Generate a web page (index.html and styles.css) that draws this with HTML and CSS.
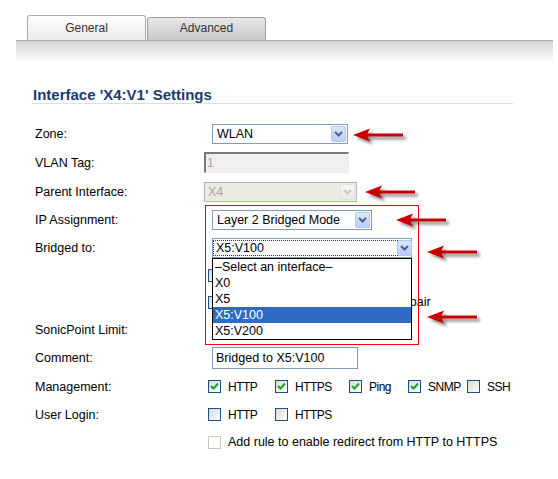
FILE: index.html
```html
<!DOCTYPE html>
<html>
<head>
<meta charset="utf-8">
<link rel="stylesheet" href="styles.css">
</head>
<body>
<div class="tabs">
  <div class="tab active">General</div>
  <div class="tab">Advanced</div>
</div>
<div class="tabbar"></div>
<h2 class="title">Interface 'X4:V1' Settings</h2>

<div class="form">
  <div class="row r28">
    <label>Zone:</label>
    <div class="select w136"><span class="val">WLAN</span><span class="btn"><svg width="9" height="6" viewBox="0 0 9 6"><path d="M1 1 L4.5 4.5 L8 1" /></svg></span></div>
  </div>
  <div class="row r29">
    <label>VLAN Tag:</label>
    <div class="input-dis">1</div>
  </div>
  <div class="row r29">
    <label>Parent Interface:</label>
    <div class="select dis w153"><span class="val">X4</span><span class="btn"><svg width="9" height="6" viewBox="0 0 9 6"><path d="M1 1 L4.5 4.5 L8 1" /></svg></span></div>
  </div>
  <div class="row r28">
    <label>IP Assignment:</label>
    <div class="select w160"><span class="val">Layer 2 Bridged Mode</span><span class="btn"><svg width="9" height="6" viewBox="0 0 9 6"><path d="M1 1 L4.5 4.5 L8 1" /></svg></span></div>
  </div>
  <div class="row r28">
    <label>Bridged to:</label>
    <div class="select w200 focus"><span class="val"><span class="dotted">X5:V100</span></span><span class="btn"><svg width="9" height="6" viewBox="0 0 9 6"><path d="M1 1 L4.5 4.5 L8 1" /></svg></span></div>
  </div>
  <div class="row r26">
    <label></label>
    <div class="opts"><div class="opt"><span class="cb"></span><span class="covered">Block all non-IPv4 traffic</span></div></div>
  </div>
  <div class="row r28">
    <label></label>
    <div class="opts"><div class="opt"><span class="cb"></span><span><span class="covered">Never route traffic on this bridge-</span>pair</span></div></div>
  </div>
  <div class="row r28">
    <label>SonicPoint Limit:</label>
  </div>
  <div class="row r28">
    <label>Comment:</label>
    <div class="input">Bridged to X5:V100</div>
  </div>
  <div class="row r29">
    <label>Management:</label>
    <div class="opts caps">
      <div class="opt w67"><span class="cb on"><svg width="11" height="11" viewBox="0 0 11 11"><path d="M2 5 L4.5 7.5 L9 2.5" /></svg></span><span>HTTP</span></div>
      <div class="opt w74"><span class="cb on"><svg width="11" height="11" viewBox="0 0 11 11"><path d="M2 5 L4.5 7.5 L9 2.5" /></svg></span><span>HTTPS</span></div>
      <div class="opt w59"><span class="cb on"><svg width="11" height="11" viewBox="0 0 11 11"><path d="M2 5 L4.5 7.5 L9 2.5" /></svg></span><span>Ping</span></div>
      <div class="opt w59"><span class="cb on"><svg width="11" height="11" viewBox="0 0 11 11"><path d="M2 5 L4.5 7.5 L9 2.5" /></svg></span><span>SNMP</span></div>
      <div class="opt"><span class="cb"></span><span>SSH</span></div>
    </div>
  </div>
  <div class="row r27">
    <label>User Login:</label>
    <div class="opts caps">
      <div class="opt w67"><span class="cb"></span><span>HTTP</span></div>
      <div class="opt"><span class="cb"></span><span>HTTPS</span></div>
    </div>
  </div>
  <div class="row r28">
    <label></label>
    <div class="opts">
      <div class="opt"><span class="cb disabled"></span><span>Add rule to enable redirect from HTTP to HTTPS</span></div>
    </div>
  </div>
</div>

<div class="redbox"></div>

<ul class="droplist">
  <li>–Select an interface–</li>
  <li>X0</li>
  <li>X5</li>
  <li class="sel">X5:V100</li>
  <li>X5:V200</li>
</ul>

<svg class="arrow a1" width="56" height="20" viewBox="0 0 56 20"><path d="M0 7 L17 0.5 L14.5 5.5 L50 5.5 L50 8.5 L14.5 8.5 L17 13.5 Z" /></svg>
<svg class="arrow a2" width="56" height="20" viewBox="0 0 56 20"><path d="M0 7 L17 0.5 L14.5 5.5 L50 5.5 L50 8.5 L14.5 8.5 L17 13.5 Z" /></svg>
<svg class="arrow a3" width="56" height="20" viewBox="0 0 56 20"><path d="M0 7 L17 0.5 L14.5 5.5 L50 5.5 L50 8.5 L14.5 8.5 L17 13.5 Z" /></svg>
<svg class="arrow a4" width="56" height="20" viewBox="0 0 56 20"><path d="M0 7 L17 0.5 L14.5 5.5 L50 5.5 L50 8.5 L14.5 8.5 L17 13.5 Z" /></svg>
<svg class="arrow a5" width="56" height="20" viewBox="0 0 56 20"><path d="M0 7 L17 0.5 L14.5 5.5 L50 5.5 L50 8.5 L14.5 8.5 L17 13.5 Z" /></svg>
</body>
</html>
```

FILE: styles.css
```css
html, body {
  margin: 0;
  padding: 0;
  background: #fff;
}
body {
  position: relative;
  width: 558px;
  height: 479px;
  overflow: hidden;
  font-family: "Liberation Sans", Arial, sans-serif;
  font-size: 12.5px;
  color: #000;
}

/* Tabs */
.tabs {
  display: flex;
  align-items: flex-end;
  gap: 1px;
  box-sizing: border-box;
  height: 40px;
  padding: 15px 0 0 27px;
}
.tab {
  box-sizing: border-box;
  width: 119px;
  height: 23px;
  border: 1px solid #9c9c9c;
  border-bottom: none;
  border-radius: 3px 3px 0 0;
  background: linear-gradient(#e9e9e9, #c9c9c9);
  color: #333;
  font-size: 12px;
  text-align: center;
  line-height: 20px;
}
.tab.active {
  height: 25px;
  line-height: 24px;
  border-color: #a9a9a9;
  background: linear-gradient(#fefefe, #ebebeb);
}
.tabbar {
  margin-left: 16px;
  width: 537px;
  height: 22px;
  border-top: 1px solid #a8a5ba;
  background: linear-gradient(#d5d5d5, #ffffff);
}

/* Section title */
.title {
  margin: 24px 0 0 32px;
  width: 481px;
  padding-left: 1px;
  box-sizing: border-box;
  font-size: 15px;
  font-weight: bold;
  line-height: 16px;
  color: #1c3a6c;
  border-bottom: 1px solid #dedede;
}

/* Form rows */
.form {
  margin-top: 16px;
}
.row {
  display: flex;
  align-items: center;
  padding-left: 35px;
}
.row > label {
  width: 169px;
  flex: none;
}
.r26 { height: 26px; }
.r27 { height: 27px; }
.r28 { height: 28px; }
.r29 { height: 29px; }

/* Select */
.select {
  display: flex;
  align-items: center;
  box-sizing: border-box;
  height: 20px;
  margin-left: 8px;
  padding-left: 4px;
  border: 1px solid #7f9db9;
  background: #fff;
}
.select .val {
  flex: 1;
  white-space: nowrap;
}
.select .btn {
  flex: none;
  display: flex;
  align-items: center;
  justify-content: center;
  box-sizing: border-box;
  width: 15px;
  height: 16px;
  margin-right: 1px;
  border: 1px solid #b5c8f3;
  border-radius: 2px;
  background: linear-gradient(#dce6fe, #b7ccf9);
}
.select .btn path {
  fill: none;
  stroke: #4d6185;
  stroke-width: 2;
}
.select.dis {
  margin-left: 0;
  padding-left: 3px;
  border-color: #a5b7c8;
  background: #ebebe4;
  color: #aca899;
}
.select.dis .btn {
  border-color: #e3e1d8;
  background: linear-gradient(#f7f6f2, #ebeae4);
}
.select.dis .btn path {
  stroke: #c9c7ba;
}
.select.focus {
  padding-left: 1px;
}
.dotted {
  display: block;
  width: 181px;
  padding-left: 2px;
  line-height: 14px;
  outline: 1px dotted #333;
}
.w136 { width: 136px; }
.w153 { width: 153px; }
.w160 { width: 160px; }
.w200 { width: 200px; }

/* Inputs */
.input-dis {
  box-sizing: border-box;
  width: 145px;
  height: 21px;
  padding-left: 1px;
  line-height: 18px;
  border-top: 2px solid #7c7a72;
  border-left: 2px solid #7c7a72;
  border-right: 1px solid #f1efe6;
  border-bottom: 1px solid #f1efe6;
  background: #eef0f4;
  color: #a8a8a8;
}
.input {
  box-sizing: border-box;
  width: 146px;
  height: 22px;
  margin-left: 8px;
  padding-left: 3px;
  line-height: 20px;
  border: 1px solid #7f9db9;
  background: #fff;
  white-space: nowrap;
}

/* Checkboxes */
.opts {
  display: flex;
  align-items: center;
  margin-left: 4px;
}
.opt {
  display: flex;
  align-items: center;
  gap: 7px;
  white-space: nowrap;
}
.caps .opt span:last-child {
  font-size: 12px;
  letter-spacing: -0.5px;
}
.covered {
  visibility: hidden;
}
.w67 { width: 67px; }
.w74 { width: 74px; }
.w59 { width: 59px; }
.cb {
  flex: none;
  display: flex;
  align-items: center;
  justify-content: center;
  box-sizing: border-box;
  width: 13px;
  height: 13px;
  border: 1px solid #1c5180;
  background: linear-gradient(135deg, #d8d8d2, #ffffff);
}
.cb path {
  fill: none;
  stroke: #21a121;
  stroke-width: 2;
}
.cb.disabled {
  border-color: #cac8bb;
  background: #fff;
}

/* Overlays */
.redbox {
  position: absolute;
  left: 205px;
  top: 205px;
  width: 214px;
  height: 140px;
  box-sizing: border-box;
  border: 1px solid #ff0000;
}
.droplist {
  position: absolute;
  left: 212px;
  top: 258px;
  width: 200px;
  height: 82px;
  box-sizing: border-box;
  margin: 0;
  padding: 0;
  list-style: none;
  border: 1px solid #000;
  background: #fff;
}
.droplist li {
  height: 16px;
  line-height: 16px;
  padding-left: 2px;
  white-space: nowrap;
}
.droplist li.sel {
  background: #316ac5;
  color: #fff;
}
.arrow {
  position: absolute;
  overflow: visible;
  filter: drop-shadow(3px 3px 1.5px rgba(0, 0, 0, 0.45));
}
.arrow path {
  fill: #c80000;
}
.a1 { left: 353px; top: 128px; }
.a2 { left: 365px; top: 185px; }
.a3 { left: 396px; top: 213px; }
.a4 { left: 427px; top: 245px; }
.a5 { left: 427px; top: 310px; }
```
